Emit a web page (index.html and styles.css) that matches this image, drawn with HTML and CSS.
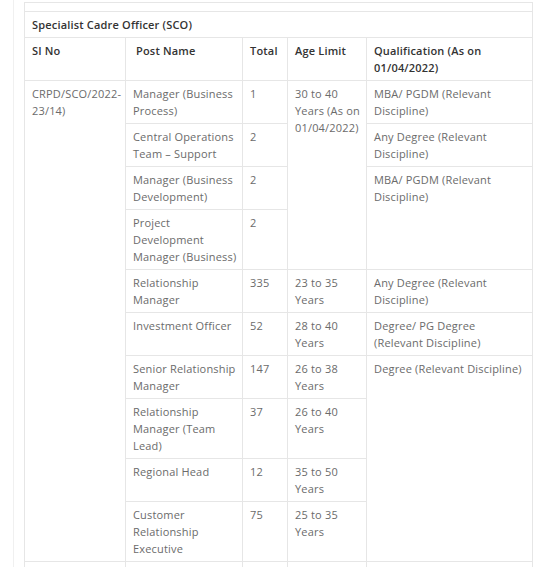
FILE: index.html
```html
<!DOCTYPE html>
<html>
<head>
<meta charset="utf-8">
<link rel="stylesheet" href="styles.css">
</head>
<body>
<div class="wrap">
<table class="jobs">
<colgroup>
<col class="c1"><col class="c2"><col class="c3"><col class="c4"><col class="c5">
</colgroup>
<tr class="prev"><td colspan="5"></td></tr>
<tr class="title"><th colspan="5">Specialist Cadre Officer (SCO)</th></tr>
<tr class="head">
<th>SI No</th><th>&nbsp;Post Name</th><th>Total</th><th>Age Limit</th><th class="qual">Qualification (As on 01/04/2022)</th>
</tr>
<tr>
<td rowspan="10">CRPD/SCO/2022-23/14)</td>
<td>Manager (Business Process)</td><td>1</td>
<td rowspan="4">30 to 40 Years (As on 01/04/2022)</td>
<td class="qual">MBA/ PGDM (Relevant Discipline)</td>
</tr>
<tr><td>Central Operations Team – Support</td><td>2</td><td class="qual">Any Degree (Relevant Discipline)</td></tr>
<tr><td>Manager (Business Development)</td><td>2</td><td class="qual" rowspan="2">MBA/ PGDM (Relevant Discipline)</td></tr>
<tr><td>Project Development Manager (Business)</td><td>2</td></tr>
<tr><td>Relationship Manager</td><td>335</td><td>23 to 35 Years</td><td class="qual">Any Degree (Relevant Discipline)</td></tr>
<tr><td>Investment Officer</td><td>52</td><td>28 to 40 Years</td><td class="qual">Degree/ PG Degree (Relevant Discipline)</td></tr>
<tr><td>Senior Relationship Manager</td><td>147</td><td>26 to 38 Years</td><td class="qual" rowspan="4">Degree (Relevant Discipline)</td></tr>
<tr><td>Relationship Manager (Team Lead)</td><td>37</td><td>26 to 40 Years</td></tr>
<tr><td>Regional Head</td><td>12</td><td>35 to 50 Years</td></tr>
<tr><td>Customer Relationship Executive</td><td>75</td><td>25 to 35 Years</td></tr>
<tr class="next"><td></td><td></td><td></td><td></td><td></td></tr>
</table>
</div>
</body>
</html>
```
FILE: styles.css
```css
html, body {
  margin: 0;
  padding: 0;
  background: #fff;
}
body {
  font-family: "Open Sans", "Liberation Sans", sans-serif;
  font-size: 11px;
  line-height: 17px;
  letter-spacing: 0.18px;
  color: #6b6b6b;
}
.wrap {
  margin-left: 13px;
  border-left: 1px solid #f0f0f0;
  padding: 2px 0 0 10px;
  height: 565px;
  overflow: hidden;
}
.jobs {
  width: 508px;
  border-collapse: collapse;
  table-layout: fixed;
}
.c1 { width: 101px; }
.c2 { width: 117px; }
.c3 { width: 45px; }
.c4 { width: 79px; }
.c5 { width: 166px; }
.jobs td, .jobs th {
  border: 1px solid #e6e6e6;
  padding: 4px 5px 4px 7px;
  vertical-align: top;
  text-align: left;
}
.jobs .qual {
  padding-right: 8px;
}
.jobs th {
  color: #333;
  font-weight: 600;
}
.prev td {
  height: 8px;
  padding: 0;
}
.next td {
  height: 20px;
}
```
